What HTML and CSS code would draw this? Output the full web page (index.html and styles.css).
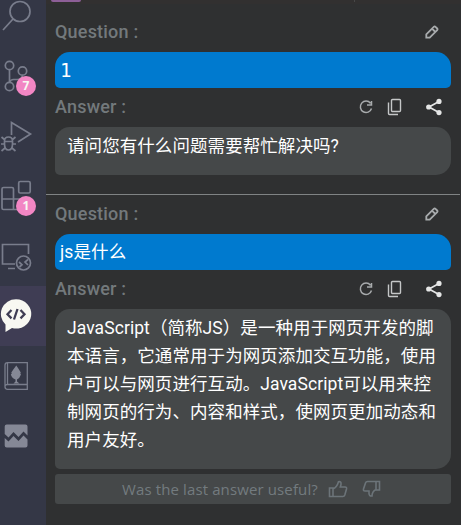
FILE: index.html
```html
<!DOCTYPE html>
<html lang="zh-CN">
<head>
<meta charset="utf-8">
<title>Chat</title>
<link rel="stylesheet" href="styles.css">
</head>
<body>
<svg class="defs" width="0" height="0">
  <symbol id="edit" viewBox="0 0 16 16"><path d="M2.300 13.700V10.300L9.800 2.800a1.200 1.200 0 0 1 1.700 0L13.200 4.500a1.200 1.200 0 0 1 0 1.700L5.700 13.700ZM8 4.600l3.400 3.400" fill="none" stroke="currentColor" stroke-width="1.800"/></symbol>
  <symbol id="refresh" viewBox="0 0 16 16"><path d="M12.500 4.200A5.700 5.700 0 1 0 13.500 9.500M13.500 2v4H9" fill="none" stroke="currentColor" stroke-width="1.500"/></symbol>
  <symbol id="copy" viewBox="0 0 16 18"><rect x="4.500" y="1.500" width="9" height="12" rx="1" fill="none" stroke="currentColor" stroke-width="1.400"/><path d="M1.500 4.500V15.500Q1.500 16.500 2.500 16.500H11" fill="none" stroke="currentColor" stroke-width="1.400"/></symbol>
  <symbol id="share" viewBox="0 0 18 18"><path d="M14 3.500L4 9l10 5.500" fill="none" stroke="currentColor" stroke-width="1.700"/><g fill="currentColor"><circle cx="14" cy="3.400" r="2.600"/><circle cx="3.700" cy="9" r="2.600"/><circle cx="14" cy="14.600" r="2.600"/></g></symbol>
</svg>
<div class="app">
  <nav class="activity">
    <div class="item"><svg viewBox="0 0 46 60"><circle cx="20" cy="25.500" r="10"/><path d="M13 33L3 44"/></svg></div>
    <div class="item"><svg viewBox="0 0 46 60"><circle cx="9.500" cy="19.500" r="4.200"/><circle cx="22.500" cy="25" r="4.200"/><circle cx="9.500" cy="40.500" r="4.200"/><path d="M9.500 24v12M22.500 29.500q-1 4-5 4h-4q-3 0-4 3"/></svg><span class="badge">7</span></div>
    <div class="item"><svg viewBox="0 0 46 60"><path d="M11.500 29V16.500L30.500 28L18 36"/><path d="M4.500 35q0-4 4-4t4 4v3q0 6-4 6t-4-6ZM4 35.500h9M1.500 31l3.500 3M15.500 31l-3.500 3M1 38h3.500M12.500 38h3.500M1.500 45l3.500-3M15.500 45l-3.500-3"/></svg></div>
    <div class="item"><svg viewBox="0 0 46 60"><rect x="18.700" y="15.500" width="11.500" height="11.500" rx="1.500"/><path d="M13.500 43.500V23q0-1.500-1.500-1.500H3.500q-1.500 0-1.500 1.500V42q0 1.500 1.500 1.500H24V33H2"/></svg><span class="badge">1</span></div>
    <div class="item"><svg viewBox="0 0 46 60"><path d="M28.500 28V18.500H2.500V38H15M8 42.500h7"/><circle cx="23.500" cy="37" r="7"/><path d="M19 36l3 2.700L19.500 41M28 33.500L25 36l3 3"/></svg></div>
    <div class="item active"><svg viewBox="0 0 46 60"><path class="bubble" d="M16 13.200a15 14.700 0 1 1-4 28.800L5.500 46V38.500A15 14.700 0 0 1 16 13.200Z"/><path class="code" d="M11.500 24L7.500 28.200l4 4.200M20.500 24l4 4.200-4 4.200M17.500 23l-3.500 10.500"/></svg></div>
    <div class="item"><svg viewBox="0 0 46 60"><path class="book" d="M7.500 16.700H27.300V43.300H7.500q-2.500 0-2.500-2.500V19q0-2.300 2.500-2.300ZM7.500 17V39M5 40.500q0-2 2.500-2H27"/><path class="solid" d="M16.300 19.500q1.500 2 4.500 7l-.5 1 .7 1q-1.500 4-4 5v2l2.500 2h-6l2-2v-2q-3.500-1-4.700-5l1-1-.5-1q3-4.500 5-7Z"/></svg></div>
    <div class="item"><svg viewBox="0 0 46 60"><path class="solid" d="M6.700 18.500H25.500Q27.500 18.500 27.500 20.500V29.500L23.500 25.500L18.500 31L13.500 26L8.500 31.500L4.700 28V20.500Q4.700 18.500 6.700 18.500ZM4.700 32L8.500 35.500L13.500 30L18.500 35L23.500 29.500L27.500 33.500V39.500Q27.500 41.500 25.500 41.500H6.700Q4.700 41.500 4.700 39.500Z"/></svg></div>
  </nav>
  <main class="panel">
    <div class="tabs"><span class="tab-on"></span><span class="tab-end"></span></div>
    <section class="turn">
      <header><h2>Question :</h2><svg class="edit"><use href="#edit"/></svg></header>
      <div class="question one">1</div>
      <header><h2>Answer :</h2><svg class="refresh"><use href="#refresh"/></svg><svg class="copy"><use href="#copy"/></svg><svg class="share"><use href="#share"/></svg></header>
      <div class="answer short"><p>请问您有什么问题需要帮忙解决吗?</p></div>
    </section>
    <section class="turn next">
      <header><h2>Question :</h2><svg class="edit"><use href="#edit"/></svg></header>
      <div class="question">js是什么</div>
      <header><h2>Answer :</h2><svg class="refresh"><use href="#refresh"/></svg><svg class="copy"><use href="#copy"/></svg><svg class="share"><use href="#share"/></svg></header>
      <div class="answer long"><p>JavaScript（简称JS）是一种用于网页开发的脚<br>本语言，它通常用于为网页添加交互功能，使用<br>户可以与网页进行互动。JavaScript可以用来控<br>制网页的行为、内容和样式，使网页更加动态和<br>用户友好。</p></div>
    </section>
    <footer><span>Was the last answer useful?</span>
      <svg class="thumb" viewBox="0 0 20 18"><path d="M1.500 8H5v8.500H1.500ZM5 9q4-2 5.500-7.300 3-.5 2.500 2.800L12.300 7H17q2 0 1.500 2l-1.700 6q-.5 1.500-2 1.500H5"/></svg>
      <svg class="thumb down" viewBox="0 0 20 18"><path d="M17.500 1.500V10H14V1.500ZM14 9.500q-4 2-4 6.500-2.800.5-3-2.500V11H3Q1 11 1.500 9L3.500 3Q4 1.500 5.500 1.500H14"/></svg>
    </footer>
  </main>
</div>
</body>
</html>
```
FILE: styles.css
```css
* { box-sizing: border-box; margin: 0; padding: 0; }
body { background: #2f3031; font-family: Roboto, "Noto Sans CJK SC", sans-serif; overflow: hidden; }
.defs { display: none; }
.app { display: flex; width: 461px; height: 525px; overflow: hidden; }
.activity { width: 46px; flex: none; background: #343746; }
.item { position: relative; height: 60px; }
.item:first-child { margin-top: -14px; }
.item svg { display: block; width: 46px; height: 60px; fill: none; stroke: #797d8c; stroke-width: 1.7; }
.item.active { background: #3f3d54; }
.item .book { stroke-width: 1.3; }
.item .solid { fill: #858896; stroke: none; }
.item .bubble { fill: #f8f8f2; stroke: none; }
.item .code { stroke: #3f3d54; stroke-width: 2.3; }
.badge { position: absolute; left: 16px; top: 30px; width: 20px; height: 20px; border-radius: 50%; background: #f286c4; color: #f8f8f2; font: 700 12px/20px "Open Sans", sans-serif; text-align: center; }
.panel { flex: 1; min-width: 0; }
.tabs { display: flex; height: 4px; padding-left: 5px; background: #323030; }
.tab-on { width: 30px; height: 2px; background: #8d5f97; border-radius: 0 0 2px 2px; }
.tab-end { width: 1px; height: 2px; margin-left: 273px; background: #474747; }
.turn { padding: 8px 10px 19px 9px; }
.turn.next { width: 414px; padding: 0 9px 5px; border-top: 1px solid #808384; }
header { height: 39px; padding-bottom: 2px; display: flex; align-items: center; color: #a8abad; }
.turn:not(.next) header:first-child { height: 40px; padding-bottom: 0; }
h2 { flex: 1; color: #73797c; font: 500 18px/24px Roboto, sans-serif; letter-spacing: .2px; }
.edit { width: 16px; height: 16px; margin-right: 11px; }
.refresh { width: 16px; height: 16px; }
.copy { width: 16px; height: 18px; margin-left: 13px; color: #c5c7c8; }
.share { width: 18px; height: 18px; margin: 0 8px 0 22px; color: #e5e6e6; }
.question { width: 396px; height: 36px; padding-left: 5px; border-radius: 15px 15px 5px 5px; background: #007acf; color: #fff; font-size: 17.5px; line-height: 36px; letter-spacing: .12px; }
.question.one { font: 19px/36px "DejaVu Sans Mono", monospace; }
.answer { width: 396px; padding: 5px 12px; border-radius: 15px 15px 15px 5px; background: #454849; color: #fff; }
.answer p { font-size: 17.5px; line-height: 28px; letter-spacing: .07px; white-space: nowrap; }
.short { height: 48px; }
.long { height: 160px; }
footer { width: 396px; height: 30px; margin-left: 9px; padding-left: 67px; display: flex; align-items: center; border-radius: 3px; background: #454849; color: #737b7f; font: 15px/20px "Open Sans", sans-serif; letter-spacing: .12px; }
.thumb { width: 20px; height: 18px; margin-left: 10px; fill: none; stroke: #6c7479; stroke-width: 1.6; }
.down { margin-left: 14px; }
```
